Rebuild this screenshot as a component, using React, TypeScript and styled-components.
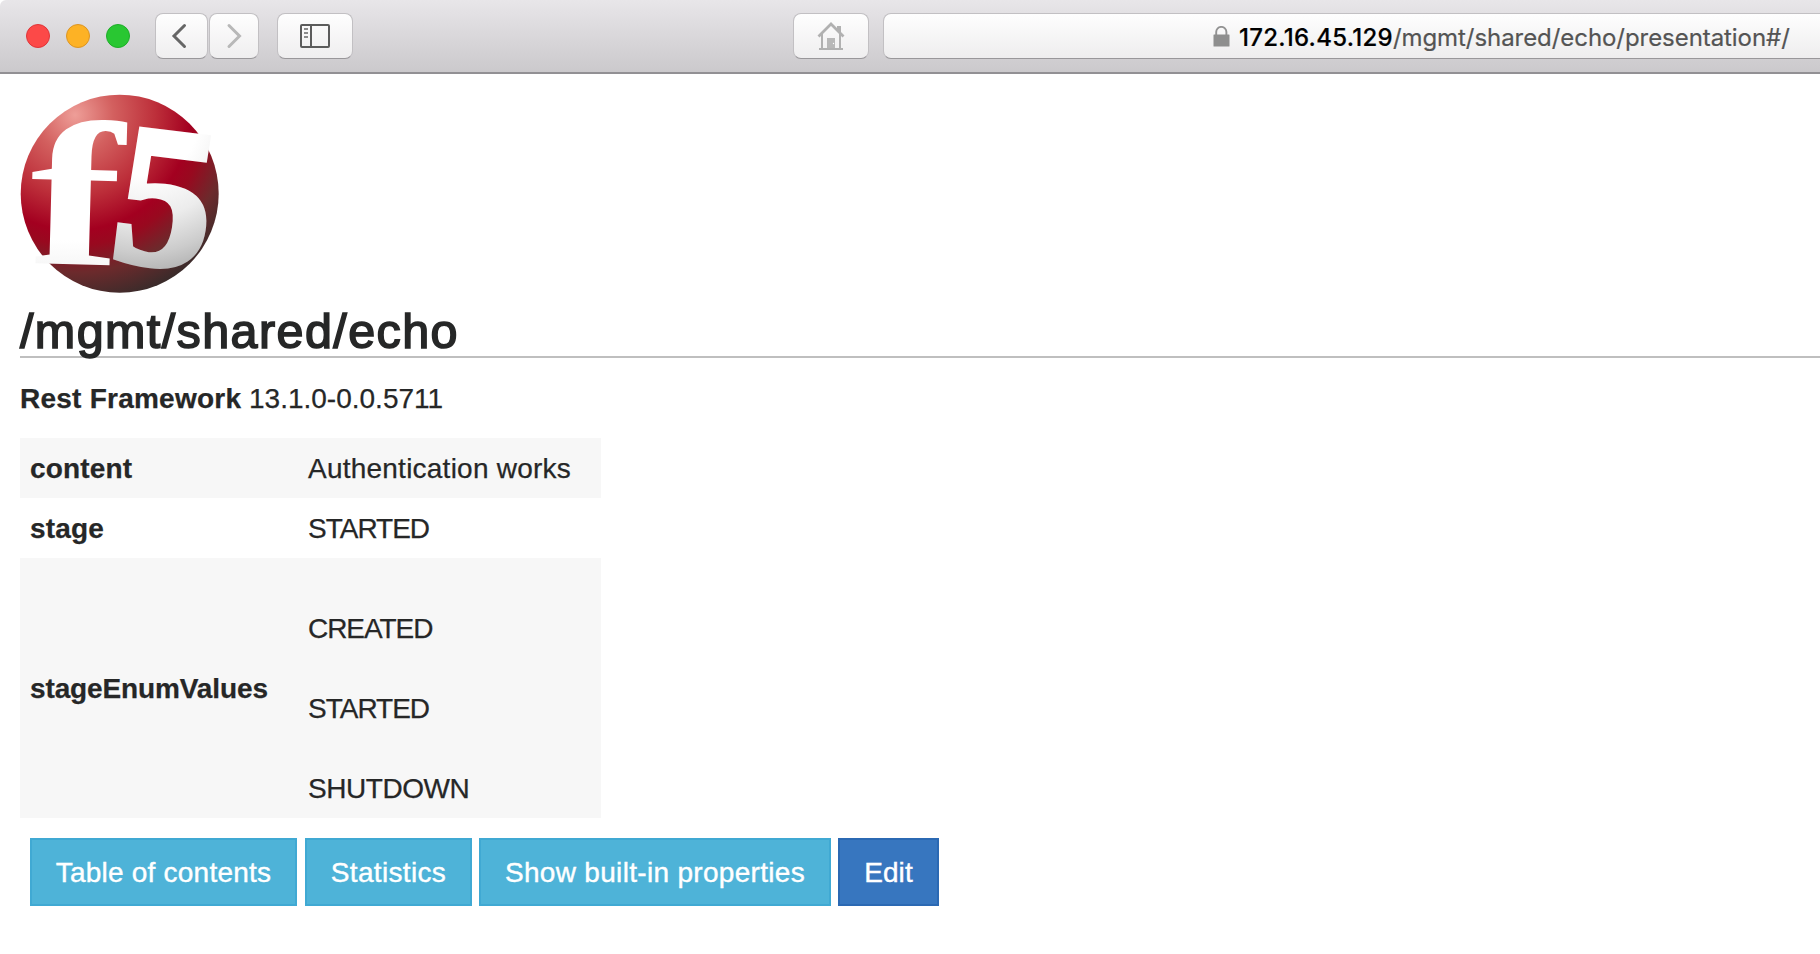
import React from "react";
import styled, { createGlobalStyle } from "styled-components";

const GlobalStyle = createGlobalStyle`
  * { box-sizing: border-box; }
  html, body { margin: 0; background: #fff; overflow: hidden; }
  body { font-family: "Liberation Sans", Arial, sans-serif; font-size: 28px; line-height: 40px; color: #262727; }
`;

const Page = styled.div`
  width: 1820px;
  height: 954px;
  overflow: hidden;
  background: #fff;
`;

const Toolbar = styled.header`
  display: flex;
  align-items: flex-start;
  height: 74px;
  padding: 13px 0 0 26px;
  overflow: hidden;
  background: linear-gradient(#e8e6e9, #cbc9cc);
  border-bottom: 2px solid #929094;
  border-top-left-radius: 6px;
`;

const Lights = styled.div`
  display: flex;
  gap: 16px;
  margin: 11px 25px 0 0;
`;

const Light = styled.span<{ $fill: string; $edge: string }>`
  width: 24px;
  height: 24px;
  border-radius: 50%;
  background: ${(p) => p.$fill};
  border: 1px solid ${(p) => p.$edge};
`;

const ToolButton = styled.button<{ $width: number; $after: number; $right?: number }>`
  flex: none;
  display: flex;
  align-items: center;
  justify-content: center;
  width: ${(p) => p.$width}px;
  height: 46px;
  margin: 0 ${(p) => p.$after}px 0 0;
  padding: 0 ${(p) => p.$right ?? 0}px 0 0;
  border: 1px solid #c2c0c3;
  border-bottom-color: #99979a;
  border-radius: 8px;
  background: linear-gradient(#fefefe, #efeeef);
`;

const AddressBar = styled.div`
  flex: none;
  display: flex;
  align-items: center;
  width: 1100px;
  height: 46px;
  padding-left: 329px;
  border: 1px solid #c2c0c3;
  border-bottom-color: #99979a;
  border-radius: 8px;
  background: linear-gradient(#fefefe, #eeedee);
`;

const Url = styled.span`
  margin: 4px 0 0 9px;
  font-family: Inter, sans-serif;
  font-size: 24px;
  line-height: 30px;
  letter-spacing: -0.06px;
  white-space: pre;
  color: #545454;
  -webkit-text-stroke: 0.2px;
`;

const Host = styled.span`
  font-weight: 500;
  letter-spacing: 0.28px;
  color: #000;
`;

const Content = styled.main`
  padding: 20px 0 0 20px;
  -webkit-text-stroke: 0.25px;
`;

const Logo = styled.svg`
  display: block;
  width: 200px;
  height: 200px;
  overflow: visible;
  -webkit-text-stroke: 0;
`;

const Title = styled.h1`
  height: 64px;
  margin: 0;
  padding-top: 9px;
  border-bottom: 2px solid #bfbfbf;
  font-size: 48.5px;
  line-height: 56px;
  font-weight: 400;
  letter-spacing: 1.4px;
  -webkit-text-stroke: 1.6px;
`;

const Version = styled.p`
  margin: 21px 0 19px;
`;

const Properties = styled.table`
  width: 581px;
  border-collapse: collapse;
`;

const Row = styled.tr<{ $height: number }>`
  height: ${(p) => p.$height}px;
  &:nth-child(odd) { background: #f7f7f7; }
`;

const Name = styled.th`
  width: 278px;
  padding: 2px 10px 0;
  text-align: left;
`;

const Value = styled.td`
  padding: 1px 10px 0;
`;

const EnumList = styled.div`
  display: flex;
  flex-direction: column;
  gap: 40px;
  padding-top: 40px;
`;

const Actions = styled.div`
  display: flex;
  padding: 20px 0 0 10px;
`;

const Action = styled.button<{ $width: number; $after?: number; $primary?: boolean; $track?: number }>`
  width: ${(p) => p.$width}px;
  height: 68px;
  margin: 0 ${(p) => p.$after ?? 0}px 0 0;
  padding: 2px 0 0;
  border: 2px solid ${(p) => (p.$primary ? "#2b69b3" : "#40a9d3")};
  background: ${(p) => (p.$primary ? "#3776bf" : "#4eb3d8")};
  color: #fff;
  font: 28px/40px "Liberation Sans", Arial, sans-serif;
  letter-spacing: ${(p) => p.$track ?? 0}px;
  white-space: nowrap;
  -webkit-text-stroke: 0.4px;
`;

const Tracked = styled.span<{ $track: number }>`
  letter-spacing: ${(p) => p.$track}px;
`;

function BrandLogo() {
  return (
    <Logo viewBox="20 94 200 200">
      <defs>
        <radialGradient id="ball" gradientUnits="userSpaceOnUse" cx="75" cy="115" r="192">
          <stop offset="0" stopColor="#ee9e98" />
          <stop offset="0.2" stopColor="#d3605f" />
          <stop offset="0.42" stopColor="#bd2f3a" />
          <stop offset="0.6" stopColor="#a30020" />
          <stop offset="0.68" stopColor="#98091f" />
          <stop offset="0.82" stopColor="#6c2a2c" />
          <stop offset="1" stopColor="#352b2a" />
        </radialGradient>
        <radialGradient id="face" gradientUnits="userSpaceOnUse" cx="20" cy="-140" r="175">
          <stop offset="0.3" stopColor="#fff" />
          <stop offset="0.55" stopColor="#ececec" />
          <stop offset="0.75" stopColor="#ccc" />
          <stop offset="1" stopColor="#999" />
        </radialGradient>
        <linearGradient id="stem" x1="0" y1="0" x2="0" y2="1">
          <stop offset="0.7" stopColor="#fff" />
          <stop offset="1" stopColor="#e9e9e9" />
        </linearGradient>
      </defs>
      <circle cx="119.700" cy="193.700" r="99" fill="url(#ball)" />
      <g fontFamily="Liberation Serif, serif" fontWeight="700">
        <text transform="translate(28 263) rotate(1.500) scale(1.340 0.990)" fontSize="208" fill="url(#stem)">f</text>
        <text transform="translate(107 258) rotate(7) skewX(-2) scale(0.960 0.990)" fontSize="203" fill="url(#face)" stroke="url(#face)" strokeWidth="6">5</text>
      </g>
    </Logo>
  );
}

export default function App() {
  return (
    <Page>
      <GlobalStyle />
      <Toolbar>
        <Lights>
          <Light $fill="#fc4948" $edge="#df3539" />
          <Light $fill="#fdb225" $edge="#dc9524" />
          <Light $fill="#29c732" $edge="#1ead29" />
        </Lights>
        <ToolButton $width={53} $after={1} $right={5} aria-label="Back">
          <svg width="16" height="28" viewBox="0 0 16 28" fill="none" stroke="#666" strokeWidth="3">
            <path d="M13.500 3.500 3 14 13.500 24.500" strokeLinecap="round" />
          </svg>
        </ToolButton>
        <ToolButton $width={50} $after={18} aria-label="Forward">
          <svg width="16" height="28" viewBox="0 0 16 28" fill="none" stroke="#b8b8b8" strokeWidth="3">
            <path d="M3 3.500 13.500 14 3 24.500" strokeLinecap="round" />
          </svg>
        </ToolButton>
        <ToolButton $width={76} $after={440} aria-label="Sidebar">
          <svg width="30" height="24" viewBox="0 0 30 24" fill="none" stroke="#5c5c5c" strokeWidth="2">
            <rect x="1" y="1" width="28" height="22" rx="1" />
            <path d="M11 1V23" />
            <path d="M4 5H8M4 9H8M4 13H8" stroke="#8b8b8b" />
          </svg>
        </ToolButton>
        <ToolButton $width={76} $after={14} aria-label="Home">
          <svg width="28" height="28" viewBox="0 0 28 28" fill="none" stroke="#b1b1b1" strokeWidth="2">
            <path d="M1.500 14.500 14 2 26.500 14.500" strokeWidth="2.800" />
            <path d="M5 12V27M23 12V27M2 27H26" />
            <path d="M20 4h4v8l-4-4z" fill="#b1b1b1" stroke="none" />
            <path d="M10 16h8v10h-8z" fill="#b8b8b8" stroke="none" />
            <circle cx="16.500" cy="21.500" r="0.700" fill="#fff" stroke="none" />
          </svg>
        </ToolButton>
        <AddressBar>
          <svg width="17" height="21" viewBox="0 0 17 21">
            <path d="M3.200 9V6a5.100 5.100 0 0 1 10.200 0V9" fill="none" stroke="#929292" strokeWidth="1.900" />
            <rect x="0.500" y="8.500" width="16" height="12" rx="0.500" fill="#8e8e8e" />
          </svg>
          <Url>
            <Host>172.16.45.129</Host>/mgmt/shared/echo/presentation#/
          </Url>
        </AddressBar>
      </Toolbar>
      <Content>
        <BrandLogo />
        <Title>/mgmt/shared/echo</Title>
        <Version>
          <Tracked as="b" $track={0.24}>Rest Framework</Tracked> 13.1.0-0.0.5711
        </Version>
        <Properties>
          <tbody>
            <Row $height={60}>
              <Name><Tracked $track={0.17}>content</Tracked></Name>
              <Value><Tracked $track={0.23}>Authentication works</Tracked></Value>
            </Row>
            <Row $height={60}>
              <Name><Tracked $track={0.17}>stage</Tracked></Name>
              <Value><Tracked $track={-1}>STARTED</Tracked></Value>
            </Row>
            <Row $height={260}>
              <Name><Tracked $track={-0.12}>stageEnumValues</Tracked></Name>
              <Value>
                <EnumList>
                  <Tracked $track={-1.05}>CREATED</Tracked>
                  <Tracked $track={-1}>STARTED</Tracked>
                  <Tracked $track={-0.45}>SHUTDOWN</Tracked>
                </EnumList>
              </Value>
            </Row>
          </tbody>
        </Properties>
        <Actions>
          <Action $width={267} $after={8} $track={0.22}>Table of contents</Action>
          <Action $width={167} $after={7} $track={0.33}>Statistics</Action>
          <Action $width={352} $after={7} $track={0.31}>Show built-in properties</Action>
          <Action $width={101} $primary $track={0.1}>Edit</Action>
        </Actions>
      </Content>
    </Page>
  );
}
